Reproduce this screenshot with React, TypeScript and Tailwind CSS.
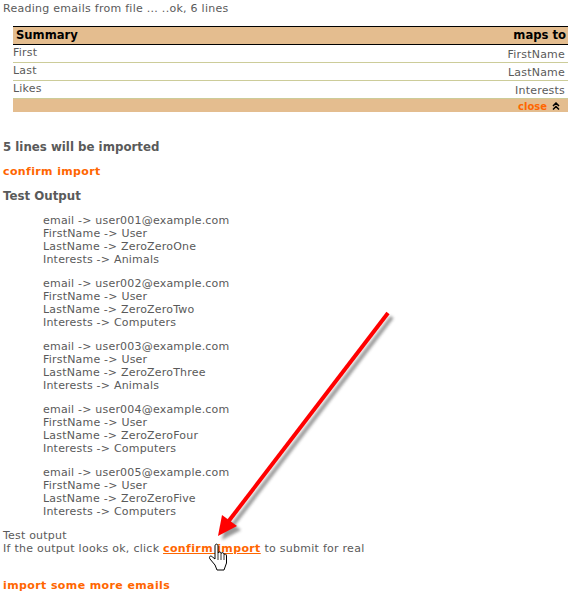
const rows = [
  ['First', 'FirstName'],
  ['Last', 'LastName'],
  ['Likes', 'Interests'],
]

const emails = [
  ['user001', 'ZeroZeroOne', 'Animals'],
  ['user002', 'ZeroZeroTwo', 'Computers'],
  ['user003', 'ZeroZeroThree', 'Animals'],
  ['user004', 'ZeroZeroFour', 'Computers'],
  ['user005', 'ZeroZeroFive', 'Computers'],
]

export default function App() {
  return (
    <div className="relative h-[597px] w-[573px] overflow-hidden bg-white pl-[3px] font-['DejaVu_Sans',Verdana,sans-serif] text-[11px] leading-[13px] tracking-[0.2px] text-[#5a5a5a]">
      <p className="pt-[2px] tracking-[0.27px]">Reading emails from file ... ..ok, 6 lines</p>

      <div className="mt-[11px] ml-[10px] w-[555px]">
        <div className="flex h-[19px] items-center justify-between border-y border-black bg-[#e4bd8f] pr-[2px] pl-[3px] text-[11.6px] font-bold tracking-normal text-black">
          <span>Summary</span>
          <span>maps to</span>
        </div>
        {rows.map((r) => (
          <div key={r[0]} className="flex h-[18px] justify-between border-b border-[#cccc99] pr-[3px]">
            <span className="pt-[1px]">{r[0]}</span>
            <span className="pt-[3px]">{r[1]}</span>
          </div>
        ))}
        <div className="flex h-[13px] items-center justify-end gap-[5px] bg-[#e4bd8f] pr-[8px]">
          <span className="pt-[2px] text-[10px] font-bold tracking-normal text-[#ff6600]">close</span>
          <svg width="8" height="8" viewBox="0 0 8 8" fill="none" stroke="black" strokeWidth="1.5">
            <path d="M1 4 L4 1 L7 4 M1 7.5 L4 4.5 L7 7.5" />
          </svg>
        </div>
      </div>

      <h2 className="mt-[28px] text-[11.8px] leading-[15px] font-bold tracking-normal">5 lines will be imported</h2>
      <p className="mt-[10px] font-bold tracking-[0.37px] text-[#ff6600]">confirm import</p>
      <h2 className="mt-[11px] text-[11.8px] leading-[15px] font-bold tracking-normal">Test Output</h2>

      <div className="mt-[10px] flex flex-col gap-[11px] pl-[40px]">
        {emails.map((e) => (
          <div key={e[0]}>
            <p>email -&gt; {e[0]}@example.com</p>
            <p>FirstName -&gt; User</p>
            <p>LastName -&gt; {e[1]}</p>
            <p>Interests -&gt; {e[2]}</p>
          </div>
        ))}
      </div>

      <p className="mt-[11px]">Test output</p>
      <p className="tracking-[0.26px]">
        If the output looks ok, click{' '}
        <span className="font-bold tracking-[0.37px] text-[#ff6600] underline">confirm import</span> to submit for real
      </p>
      <p className="mt-[24px] font-bold tracking-[0.39px] text-[#ff6600]">import some more emails</p>

      {/* annotation arrow and cursor lie over the page */}
      <svg className="absolute top-0 left-0" width="573" height="597" viewBox="0 0 573 597">
        <defs>
          <filter id="arrowShadow" x="-20%" y="-20%" width="150%" height="150%">
            <feGaussianBlur stdDeviation="1.6" />
          </filter>
        </defs>
        <g transform="translate(4 4)" filter="url(#arrowShadow)" opacity="0.55" fill="#444" stroke="#444">
          <path d="M388 313 L228 522" strokeWidth="4" />
          <path d="M218 536 L222 515 L237 526 Z" stroke="none" />
        </g>
        <path d="M388 313 L228 522" stroke="#ff0000" strokeWidth="4" />
        <path d="M218 536 L222 515 L237 526 Z" fill="#ff0000" />
        <path
          d="M215 565 L210 559 C208.5 556.5 210.5 555 212.5 557 L215 559 L215 546 C215 543.5 218 543.5 218 546 L218 553 C219 551.5 221 551.5 221 553.5 C222 552 224 552.5 224 554.5 C225 553.5 226.5 554 226.5 556 L226.5 563 L224 570 L217 570 Z"
          fill="white"
          stroke="black"
          strokeWidth="1"
        />
        <path d="M218 553 L218 560 M221 553.5 L221 560 M224 554.5 L224 560" stroke="black" strokeWidth="0.8" fill="none" />
      </svg>
    </div>
  )
}
